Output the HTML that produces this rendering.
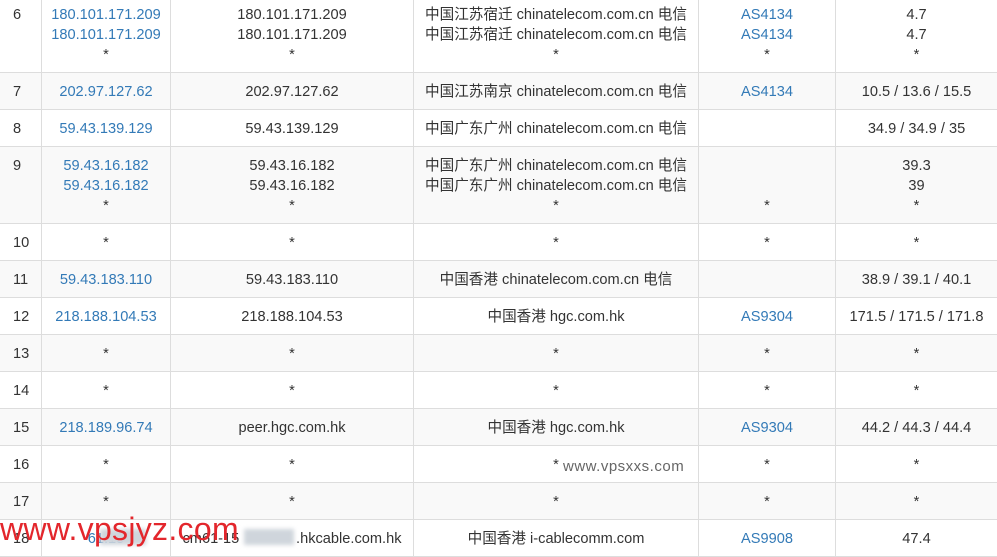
<!DOCTYPE html>
<html><head><meta charset="utf-8"><style>
body{margin:0;width:997px;height:545px;overflow:hidden;background:#fff;position:relative;font-family:"Liberation Sans","Noto Sans CJK SC",sans-serif;font-size:14.6px;color:#333}
table{position:absolute;left:-1px;top:-5px;border-collapse:collapse;table-layout:fixed;width:998px}
td{border:1px solid #ddd;padding:9px 0 7px;line-height:20px;height:20px;text-align:center;vertical-align:top;white-space:nowrap;overflow:hidden}
td:first-child{text-align:left;padding-left:13px}
tr:nth-child(even) td{background:#f9f9f9}
a{color:#337ab7}
.wm{position:absolute;left:563px;top:458px;color:#666;font-size:15px;letter-spacing:.5px}
.red{position:absolute;left:0;top:511px;color:#e3262c;font-size:32px;letter-spacing:.3px;line-height:36px}
.blur{position:absolute;background:#cfd5dc;filter:blur(2px)}
</style></head><body>
<table>
<colgroup><col style="width:42px"><col style="width:129px"><col style="width:243px"><col style="width:285px"><col style="width:137px"><col style="width:162px"></colgroup>
<tr><td>6</td><td><a>180.101.171.209</a><br><a>180.101.171.209</a><br>*</td><td>180.101.171.209<br>180.101.171.209<br>*</td><td>中国江苏宿迁 chinatelecom.com.cn 电信<br>中国江苏宿迁 chinatelecom.com.cn 电信<br>*</td><td><a>AS4134</a><br><a>AS4134</a><br>*</td><td>4.7<br>4.7<br>*</td></tr>
<tr><td>7</td><td><a>202.97.127.62</a></td><td>202.97.127.62</td><td>中国江苏南京 chinatelecom.com.cn 电信</td><td><a>AS4134</a></td><td>10.5 / 13.6 / 15.5</td></tr>
<tr><td>8</td><td><a>59.43.139.129</a></td><td>59.43.139.129</td><td>中国广东广州 chinatelecom.com.cn 电信</td><td></td><td>34.9 / 34.9 / 35</td></tr>
<tr><td>9</td><td><a>59.43.16.182</a><br><a>59.43.16.182</a><br>*</td><td>59.43.16.182<br>59.43.16.182<br>*</td><td>中国广东广州 chinatelecom.com.cn 电信<br>中国广东广州 chinatelecom.com.cn 电信<br>*</td><td><br><br>*</td><td>39.3<br>39<br>*</td></tr>
<tr><td>10</td><td>*</td><td>*</td><td>*</td><td>*</td><td>*</td></tr>
<tr><td>11</td><td><a>59.43.183.110</a></td><td>59.43.183.110</td><td>中国香港 chinatelecom.com.cn 电信</td><td></td><td>38.9 / 39.1 / 40.1</td></tr>
<tr><td>12</td><td><a>218.188.104.53</a></td><td>218.188.104.53</td><td>中国香港 hgc.com.hk</td><td><a>AS9304</a></td><td>171.5 / 171.5 / 171.8</td></tr>
<tr><td>13</td><td>*</td><td>*</td><td>*</td><td>*</td><td>*</td></tr>
<tr><td>14</td><td>*</td><td>*</td><td>*</td><td>*</td><td>*</td></tr>
<tr><td>15</td><td><a>218.189.96.74</a></td><td>peer.hgc.com.hk</td><td>中国香港 hgc.com.hk</td><td><a>AS9304</a></td><td>44.2 / 44.3 / 44.4</td></tr>
<tr><td>16</td><td>*</td><td>*</td><td>*</td><td>*</td><td>*</td></tr>
<tr><td>17</td><td>*</td><td>*</td><td>*</td><td>*</td><td>*</td></tr>
<tr><td>18</td><td><a>61.15</a></td><td>cm61-15&nbsp;&nbsp;&nbsp;&nbsp;&nbsp;&nbsp;&nbsp;&nbsp;&nbsp;&nbsp;&nbsp;&nbsp;&nbsp;&nbsp;.hkcable.com.hk</td><td>中国香港 i-cablecomm.com</td><td><a>AS9908</a></td><td>47.4</td></tr>
</table>
<div class="blur" style="left:100px;top:529px;width:46px;height:16px"></div>
<div class="blur" style="left:244px;top:529px;width:50px;height:16px"></div>
<div class="wm">www.vpsxxs.com</div>
<div class="red">www.vpsjyz.com</div>
</body></html>
